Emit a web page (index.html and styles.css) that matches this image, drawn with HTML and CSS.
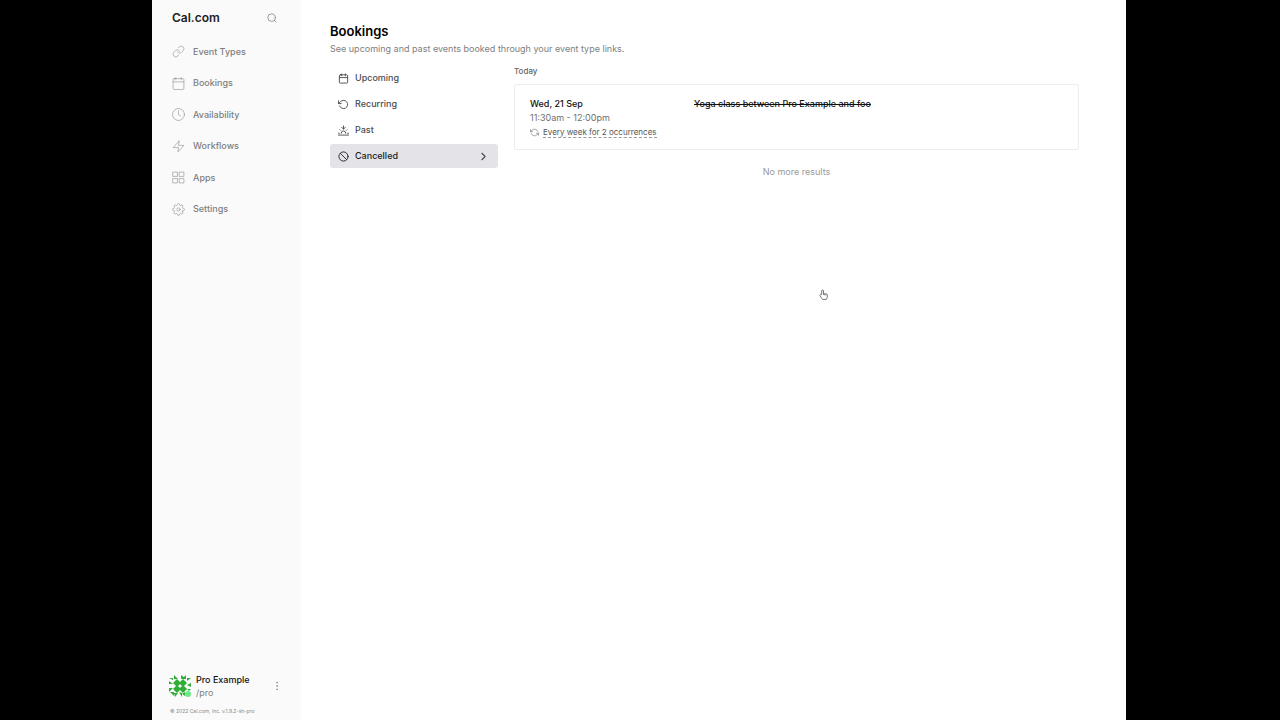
FILE: index.html
```html
<!DOCTYPE html>
<html lang="en">
<head>
    <meta charset="utf-8">
    <title>Bookings | Cal.com</title>
    <link rel="stylesheet" href="styles.css">
</head>
<body>
    <div class="app">
        <aside class="sidebar">
            <div class="brand">
                <a href="#" class="logo">Cal.com</a>
                <button class="icon-btn" aria-label="Search">
                    <svg class="icon search" viewBox="0 0 24 24"><circle cx="11" cy="11" r="9"/><path d="M22 22l-4.500-4.500"/></svg>
                </button>
            </div>

            <nav class="nav">
                <a href="#">
                    <svg class="icon" viewBox="0 0 24 24"><path d="M10 13a5 5 0 0 0 7.54.54l3-3a5 5 0 0 0-7.07-7.07l-1.72 1.71"/><path d="M14 11a5 5 0 0 0-7.54-.54l-3 3a5 5 0 0 0 7.07 7.07l1.71-1.71"/></svg>
                    Event Types
                </a>
                <a href="#">
                    <svg class="icon" viewBox="0 0 24 24"><rect x="2" y="3" width="20" height="20" rx="2"/><path d="M17 1v4M7 1v4M2 9h20"/></svg>
                    Bookings
                </a>
                <a href="#">
                    <svg class="icon" viewBox="0 0 24 24"><circle cx="12" cy="12" r="11"/><path d="M12 5v7l4 3"/></svg>
                    Availability
                </a>
                <a href="#">
                    <svg class="icon" viewBox="0 0 24 24"><path d="M13 2L2 14h10l-1 8 11-12H12l1-8z"/></svg>
                    Workflows
                </a>
                <a href="#">
                    <svg class="icon" viewBox="0 0 24 24"><path d="M2 2h8v8H2zM14 2h8v8h-8zM14 14h8v8h-8zM2 14h8v8H2z"/></svg>
                    Apps
                </a>
                <a href="#">
                    <svg class="icon" viewBox="0 0 24 24"><circle cx="12" cy="12" r="3"/><path d="M19.4 15a1.65 1.65 0 0 0 .33 1.82l.06.06a2 2 0 1 1-2.83 2.83l-.06-.06a1.65 1.65 0 0 0-2.8 1.17V21a2 2 0 0 1-4 0v-.09A1.65 1.65 0 0 0 9 19.4a1.65 1.65 0 0 0-1.82.33l-.06.06a2 2 0 1 1-2.83-2.83l.06-.06a1.65 1.65 0 0 0-1.17-2.8H3a2 2 0 0 1 0-4h.09A1.65 1.65 0 0 0 4.6 9a1.65 1.65 0 0 0-.33-1.82l-.06-.06a2 2 0 1 1 2.83-2.83l.06.06A1.65 1.65 0 0 0 9 4.6a1.65 1.65 0 0 0 1-1.51V3a2 2 0 0 1 4 0v.09a1.65 1.65 0 0 0 2.8 1.17l.06-.06a2 2 0 1 1 2.83 2.83l-.06.06A1.65 1.65 0 0 0 19.4 9a1.65 1.65 0 0 0 1.51 1H21a2 2 0 0 1 0 4h-.09a1.65 1.65 0 0 0-1.51 1z"/></svg>
                    Settings
                </a>
            </nav>

            <div class="user">
                <svg class="avatar" viewBox="0 0 24 24">
                    <g fill="#2fae35">
                        <path d="M9 5l4 4-4 4-4-4zM15 5l4 4-4 4-4-4zM9 11l4 4-4 4-4-4zM15 11l4 4-4 4-4-4z"/>
                        <path d="M6 1l4 4H6zM13 1l4 3-4 1zM18 1v4h-4zM1 4h4v2zM19 4h4l-4 3zM1 7l4 3H1zM23 9v4l-4-2zM1 14h4l-4 4zM19 15h4l-2 2zM2 18h4v4zM6 19h4l-3 4zM11 18l3 1v4zM17 18v4l-3-2z"/>
                    </g>
                    <circle cx="20" cy="20" r="3" fill="#6ee787"/>
                </svg>
                <div class="user-name">
                    <strong>Pro Example</strong>
                    <span>/pro</span>
                </div>
                <button class="icon-btn" aria-label="User menu">
                    <svg class="icon dots" viewBox="0 0 24 24"><circle cx="12" cy="4" r="1"/><circle cx="12" cy="12" r="1"/><circle cx="12" cy="20" r="1"/></svg>
                </button>
            </div>
            <small class="copyright">© 2022 Cal.com, Inc. v.1.9.2-sh-pro</small>
        </aside>

        <main class="main">
            <h1>Bookings</h1>
            <p class="subtitle">See upcoming and past events booked through your event type links.</p>

            <div class="columns">
                <nav class="tabs">
                    <a href="#">
                        <svg class="icon" viewBox="0 0 24 24"><rect x="3" y="4" width="18" height="18" rx="2"/><path d="M16 2v4M8 2v4M3 10h18"/></svg>
                        Upcoming
                    </a>
                    <a href="#">
                        <svg class="icon" viewBox="0 0 24 24"><path d="M1 4v6h6"/><path d="M3.510 15a9 9 0 1 0 2.130-9.360L1 10"/></svg>
                        Recurring
                    </a>
                    <a href="#">
                        <svg class="icon" viewBox="0 0 24 24"><path d="M17 18a5 5 0 0 0-10 0M12 9V2M4.220 10.220l1.420 1.420M1 18h2M21 18h2M18.360 11.640l1.420-1.420M23 22H1M16 5l-4 4-4-4"/></svg>
                        Past
                    </a>
                    <a href="#" class="active">
                        <svg class="icon" viewBox="0 0 24 24"><circle cx="12" cy="12" r="10"/><path d="M4.930 4.930l14.140 14.140"/></svg>
                        Cancelled
                        <svg class="icon chevron" viewBox="0 0 24 24"><path d="M9 18l6-6-6-6"/></svg>
                    </a>
                </nav>

                <section class="results">
                    <h2>Today</h2>
                    <article class="booking">
                        <div class="when">
                            <div class="date">Wed, 21 Sep</div>
                            <div class="time">11:30am - 12:00pm</div>
                            <div class="repeat">
                                <svg class="icon" viewBox="0 0 24 24"><path d="M1 4v6h6M23 20v-6h-6"/><path d="M20.490 9A9 9 0 0 0 5.640 5.640L1 10M23 14l-4.640 4.360A9 9 0 0 1 3.510 15"/></svg>
                                <span>Every week for 2 occurrences</span>
                            </div>
                        </div>
                        <del class="title">Yoga class between Pro Example and foo</del>
                    </article>
                    <p class="no-more">No more results</p>
                </section>
            </div>

            <!-- hand pointer -->
            <svg class="pointer" viewBox="0 0 20 24"><path d="M6 12V4a2 2 0 0 1 4 0v6l6 1a3 3 0 0 1 3 3l-1 5-2 4H8l-3-4-3-5a2 2 0 0 1 3-2z"/><path d="M10 10v3M13 11v3M16 12v2"/></svg>
        </main>
    </div>
</body>
</html>
```
FILE: styles.css
```css
* {
    margin: 0;
    padding: 0;
    box-sizing: border-box;
}
body {
    background-color: #000;
    color: #111;
    font-family: Inter, "Liberation Sans", sans-serif;
    font-size: 9px;
    line-height: 14px;
}
a {
    color: inherit;
    text-decoration: none;
}
.app {
    display: flex;
    min-height: 100vh;
    margin: 0 154px 0 152px;
    background-color: #fff;
}
.icon {
    flex: none;
    width: 14px;
    height: 14px;
    fill: none;
    stroke: currentColor;
    stroke-width: 2;
    stroke-linecap: round;
    stroke-linejoin: round;
}
.icon-btn {
    display: flex;
    border: none;
    background: none;
    color: #888;
    cursor: pointer;
}

/* Sidebar */
.sidebar {
    display: flex;
    flex-direction: column;
    flex: none;
    width: 149px;
    padding: 8px 16px 5px;
    background-color: #fafafa;
}
.brand {
    display: flex;
    align-items: center;
    justify-content: space-between;
    height: 20px;
    padding: 0 8px 0 4px;
}
.logo {
    font-size: 12px;
    font-weight: 600;
    color: #222;
}
.search {
    width: 10px;
    height: 10px;
}
.nav {
    display: grid;
    grid-auto-rows: 1fr;
    height: 189px;
    margin-top: 8px;
    color: #808080;
    font-weight: 500;
}
.nav a {
    display: flex;
    align-items: center;
    gap: 8px;
    padding-left: 4px;
}
.nav .icon {
    width: 13px;
    height: 13px;
    stroke-width: 1;
}
.user {
    display: flex;
    align-items: center;
    margin-top: auto;
}
.avatar {
    width: 24px;
    height: 24px;
    margin-right: 4px;
}
.user-name {
    flex: 1;
    line-height: 13px;
}
.user-name strong,
.user-name span {
    display: block;
}
.user-name strong {
    font-weight: 500;
}
.user-name span {
    color: #808080;
}
.dots {
    width: 10px;
    height: 10px;
    margin-right: 3px;
}
.copyright {
    margin-top: 8px;
    padding-left: 2px;
    color: #888;
    font-size: 5px;
    line-height: 8px;
}

/* Page */
.main {
    position: relative;
    flex: 1;
    padding: 22px 47px 22px 29px;
}
h1 {
    font-size: 13px;
    font-weight: 600;
    line-height: 18px;
    color: #000;
}
.subtitle {
    margin-top: 2px;
    color: #808080;
}
.columns {
    display: flex;
    gap: 16px;
    margin-top: 8px;
}
.tabs {
    display: flex;
    flex-direction: column;
    flex: none;
    gap: 2px;
    width: 168px;
    padding-top: 2px;
    color: #4b4b50;
    font-weight: 500;
}
.tabs a {
    display: flex;
    align-items: center;
    gap: 6px;
    height: 24px;
    padding: 0 8px;
    border-radius: 3px;
}
.tabs .icon {
    width: 11px;
    height: 11px;
}
.tabs .active {
    background-color: #e3e3e8;
    color: #222;
}
.tabs .chevron {
    width: 13px;
    height: 13px;
    margin-left: auto;
    color: #4b4b50;
}
.results {
    flex: 1;
}
h2 {
    color: #666;
    font-size: 8px;
    font-weight: 500;
    line-height: 14px;
}
.booking {
    display: flex;
    margin-top: 6px;
    padding: 12px 15px 10px;
    border: 1px solid #ededed;
    border-radius: 2px;
}
.when {
    width: 164px;
}
.date,
.title {
    font-weight: 500;
}
.time {
    color: #707070;
}
.repeat {
    display: flex;
    align-items: center;
    gap: 4px;
    min-height: 14px;
    color: #555;
    font-size: 8px;
}
.repeat .icon {
    width: 9px;
    height: 9px;
    color: #888;
}
.repeat span {
    border-bottom: 1px dashed #999;
    line-height: 10px;
}
.no-more {
    margin-top: 15px;
    color: #999;
    text-align: center;
}
.pointer {
    position: absolute;
    top: 289px;
    left: 518px;
    width: 9px;
    height: 11px;
    fill: #fff;
    stroke: #666;
    stroke-width: 2;
}
```
